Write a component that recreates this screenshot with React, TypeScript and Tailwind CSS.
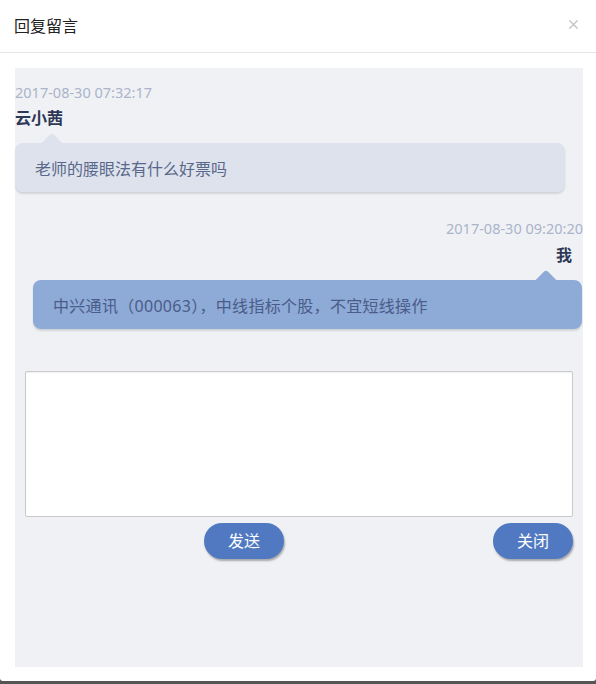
import { X } from "lucide-react";

const font = { fontFamily: "'Noto Sans', 'Noto Sans CJK SC', sans-serif" };

export default function App() {
  return (
    <div className="w-[596px] h-[684px] bg-[#555555]" style={font}>
      <div className="h-[681px] bg-white rounded-b-[3px] flex flex-col">
        {/* Header */}
        <div className="h-[53px] shrink-0 border-b border-[#e5e5e5] flex items-center justify-between pl-[14px] pr-[15px]">
          <span className="text-[16px] text-[#222] leading-none mb-[1px]">回复留言</span>
          <X size={15} strokeWidth={2.2} className="text-[#c4c4c4] mb-[3px]" />
        </div>

        {/* Body */}
        <div className="ml-[15px] mr-[13px] mt-[15px] h-[599px] bg-[#f0f1f5] flex flex-col pt-[14px]">
          <div className="text-[14.5px] leading-[20px] text-[#aab4ca]">2017-08-30 07:32:17</div>
          <div className="mt-[5px] text-[16px] leading-[22px] font-bold text-[#2d3756]">云小茜</div>
          <div className="relative mt-[14px] mr-[18px] h-[49px] rounded-[8px] bg-[#dde2ec] shadow-[0_2px_2px_rgba(0,0,0,0.12)] flex items-center pl-[20px]">
            <div className="absolute left-[29px] top-[-7px] w-[16px] h-[16px] rotate-45 rounded-tl-[3px] bg-[#dde2ec]" />
            <span className="relative text-[16px] text-[#59678a] mt-[2px]">老师的腰眼法有什么好票吗</span>
          </div>

          <div className="mt-[26px] text-right text-[14.5px] leading-[20px] text-[#aab4ca]">2017-08-30 09:20:20</div>
          <div className="mt-[6px] mr-[11px] text-right text-[16px] leading-[22px] font-bold text-[#2d3756]">我</div>
          <div className="relative mt-[14px] ml-[18px] mr-[1px] h-[49px] rounded-[8px] bg-[#8eaad7] shadow-[0_2px_2px_rgba(0,0,0,0.12)] flex items-center pl-[20px]">
            <div className="absolute right-[28px] top-[-7px] w-[16px] h-[16px] rotate-45 rounded-tl-[3px] bg-[#8eaad7]" />
            <span className="relative text-[16px] text-[#4a5c88] tracking-[0.3px] mt-[2px]">中兴通讯（000063），中线指标个股，不宜短线操作</span>
          </div>

          <div className="mx-[10px] mt-[42px] flex flex-col">
            <textarea className="h-[146px] w-full resize-none bg-white border border-[#cacaca] rounded-[2px] shadow-[inset_0_1px_1px_rgba(0,0,0,0.06)] outline-none" />
            <div className="mt-[6px] flex justify-between pl-[179px]">
              <button className="w-[80px] h-[36px] rounded-full bg-[#5079c1] text-white text-[16px] shadow-[1px_2px_2px_rgba(0,0,0,0.3)]">
                发送
              </button>
              <button className="w-[80px] h-[36px] rounded-full bg-[#5079c1] text-white text-[16px] shadow-[1px_2px_2px_rgba(0,0,0,0.3)]">
                关闭
              </button>
            </div>
          </div>
        </div>
      </div>
    </div>
  );
}
